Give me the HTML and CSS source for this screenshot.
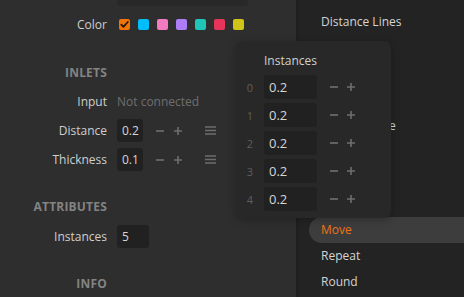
FILE: index.html
```html
<!DOCTYPE html>
<html>
<head>
<meta charset="utf-8">
<link rel="stylesheet" href="styles.css">
</head>
<body>
<div class="app">
  <div class="inspector">
    <div class="row row-top">
      <div class="label"></div>
      <div class="name-field">Distance Lines</div>
    </div>
    <div class="row row-color">
      <div class="label">Color</div>
      <div class="swatches">
        <span class="swatch sw-orange"><svg width="11" height="11" viewBox="0 0 11 11"><path d="M2.3 5.6 L4.4 7.8 L8.8 3.0" fill="none" stroke="#2a1a0a" stroke-width="1.8" stroke-linecap="round" stroke-linejoin="round"/></svg></span>
        <span class="swatch sw-cyan"></span>
        <span class="swatch sw-pink"></span>
        <span class="swatch sw-purple"></span>
        <span class="swatch sw-teal"></span>
        <span class="swatch sw-red"></span>
        <span class="swatch sw-yellow"></span>
      </div>
    </div>
    <div class="heading h-inlets"><span>INLETS</span></div>
    <div class="row row-field r-input">
      <div class="label">Input</div>
      <div class="muted">Not connected</div>
    </div>
    <div class="row row-field r-gap">
      <div class="label">Distance</div>
      <div class="num">0.2</div>
      <div class="steppers">
        <svg class="ico" width="8" height="8" viewBox="0 0 8 8"><path d="M0 4H8" stroke="#6e6e6e" stroke-width="1.6"/></svg>
        <svg class="ico" width="8" height="8" viewBox="0 0 8 8"><path d="M0 4H8M4 0V8" stroke="#6e6e6e" stroke-width="1.6"/></svg>
      </div>
      <svg class="menu" width="11" height="9" viewBox="0 0 11 9"><path d="M0 1H11M0 4.5H11M0 8H11" stroke="#6e6e6e" stroke-width="1.6"/></svg>
    </div>
    <div class="row row-field r-gap">
      <div class="label">Thickness</div>
      <div class="num">0.1</div>
      <div class="steppers">
        <svg class="ico" width="8" height="8" viewBox="0 0 8 8"><path d="M0 4H8" stroke="#6e6e6e" stroke-width="1.6"/></svg>
        <svg class="ico" width="8" height="8" viewBox="0 0 8 8"><path d="M0 4H8M4 0V8" stroke="#6e6e6e" stroke-width="1.6"/></svg>
      </div>
      <svg class="menu" width="11" height="9" viewBox="0 0 11 9"><path d="M0 1H11M0 4.5H11M0 8H11" stroke="#6e6e6e" stroke-width="1.6"/></svg>
    </div>
    <div class="heading h-attr"><span>ATTRIBUTES</span></div>
    <div class="row row-field r-inst">
      <div class="label">Instances</div>
      <div class="num num-wide">5</div>
    </div>
    <div class="heading h-info"><span>INFO</span></div>
  </div>
  <div class="divider"></div>
  <div class="browser">
    <ul class="list">
      <li class="item">Distance Field</li>
      <li class="item">Distance Lines</li>
      <li class="item">Edge</li>
      <li class="item">Fill</li>
      <li class="item">Grid</li>
      <li class="item">Lattice Shape</li>
      <li class="item">Line</li>
      <li class="item">Mirror</li>
      <li class="item">Mask</li>
      <li class="item active">Move</li>
      <li class="item">Repeat</li>
      <li class="item">Round</li>
    </ul>
  </div>
  <div class="popover">
    <div class="pop-title">Instances</div>
    <div class="pop-rows">
      <div class="pop-row"><span class="idx">0</span><span class="pnum">0.2</span><span class="steppers"><svg width="8" height="8" viewBox="0 0 8 8"><path d="M0 4H8" stroke="#6e6e6e" stroke-width="1.6"/></svg><svg width="8" height="8" viewBox="0 0 8 8"><path d="M0 4H8M4 0V8" stroke="#6e6e6e" stroke-width="1.6"/></svg></span></div>
      <div class="pop-row"><span class="idx">1</span><span class="pnum">0.2</span><span class="steppers"><svg width="8" height="8" viewBox="0 0 8 8"><path d="M0 4H8" stroke="#6e6e6e" stroke-width="1.6"/></svg><svg width="8" height="8" viewBox="0 0 8 8"><path d="M0 4H8M4 0V8" stroke="#6e6e6e" stroke-width="1.6"/></svg></span></div>
      <div class="pop-row"><span class="idx">2</span><span class="pnum">0.2</span><span class="steppers"><svg width="8" height="8" viewBox="0 0 8 8"><path d="M0 4H8" stroke="#6e6e6e" stroke-width="1.6"/></svg><svg width="8" height="8" viewBox="0 0 8 8"><path d="M0 4H8M4 0V8" stroke="#6e6e6e" stroke-width="1.6"/></svg></span></div>
      <div class="pop-row"><span class="idx">3</span><span class="pnum">0.2</span><span class="steppers"><svg width="8" height="8" viewBox="0 0 8 8"><path d="M0 4H8" stroke="#6e6e6e" stroke-width="1.6"/></svg><svg width="8" height="8" viewBox="0 0 8 8"><path d="M0 4H8M4 0V8" stroke="#6e6e6e" stroke-width="1.6"/></svg></span></div>
      <div class="pop-row"><span class="idx">4</span><span class="pnum">0.2</span><span class="steppers"><svg width="8" height="8" viewBox="0 0 8 8"><path d="M0 4H8" stroke="#6e6e6e" stroke-width="1.6"/></svg><svg width="8" height="8" viewBox="0 0 8 8"><path d="M0 4H8M4 0V8" stroke="#6e6e6e" stroke-width="1.6"/></svg></span></div>
    </div>
  </div>
</div>
</body>
</html>
```
FILE: styles.css
```css
* { box-sizing: border-box; }
html, body {
  margin: 0;
  padding: 0;
  width: 464px;
  height: 297px;
  overflow: hidden;
  background: #2e2e2e;
  font-family: "Open Sans", "Noto Sans", sans-serif;
  font-size: 12px;
  color: #d2d2d2;
}
.app {
  position: relative;
  display: flex;
  width: 464px;
  height: 297px;
  overflow: hidden;
}
.inspector {
  width: 296px;
  flex: none;
  display: flex;
  flex-direction: column;
  background: #2e2e2e;
}
.divider {
  width: 3px;
  flex: none;
  background: #1f1f1f;
}
.browser {
  flex: 1;
  background: #232323;
  overflow: hidden;
}
.row {
  display: flex;
  align-items: center;
  gap: 10px;
}
.label {
  width: 107px;
  flex: none;
  text-align: right;
  color: #cfcfcf;
  line-height: 16px;
}
.row-top {
  height: 24px;
  margin-top: -18px;
}
.name-field {
  width: 131px;
  height: 24px;
  border-radius: 4px;
  background: #282828;
  color: #3a3a3a;
  padding-left: 8px;
  line-height: 24px;
  font-size: 11px;
}
.row-color {
  height: 11px;
  margin-top: 13px;
  gap: 12px;
}
.swatches {
  display: flex;
  gap: 8px;
}
.swatch {
  width: 11px;
  height: 11px;
  border-radius: 2px;
  display: block;
}
.swatch svg { display: block; }
.sw-orange { background: #f27405; }
.sw-cyan { background: #00bdfc; }
.sw-pink { background: #f27ac0; }
.sw-purple { background: #ad7cf7; }
.sw-teal { background: #1fc6b8; }
.sw-red { background: #e7345a; }
.sw-yellow { background: #d1c418; }
.heading {
  height: 16px;
  display: flex;
  justify-content: flex-end;
  width: 107px;
  font-weight: 700;
  color: #838383;
  font-size: 12px;
  line-height: 16px;
  letter-spacing: 0.2px;
}
.h-inlets { margin-top: 35px; }
.h-attr { margin-top: 28px; }
.h-info { margin-top: 28px; }
.row-field {
  height: 23px;
}
.r-input { margin-top: 9px; }
.r-gap { margin-top: 6px; }
.r-inst { margin-top: 10px; }
.muted {
  color: #6f6f6f;
}
.num {
  width: 26px;
  height: 23px;
  border-radius: 3px;
  background: #212121;
  color: #d6d6d6;
  line-height: 23px;
  padding-left: 5px;
}
.num-wide { width: 32px; }
.steppers {
  display: flex;
  align-items: center;
  gap: 10px;
  margin-left: 3px;
}
.steppers svg { display: block; }
.menu {
  display: block;
  margin-left: 13px;
}
.list {
  list-style: none;
  margin: -17px 0 0 0;
  padding: 0 0 0 10px;
}
.item {
  height: 26px;
  line-height: 26px;
  padding-left: 12px;
  color: #d4d4d4;
  border-radius: 13px 0 0 13px;
  white-space: nowrap;
}
.item.active {
  background: #3d3d3d;
  color: #ec7418;
}
.popover {
  position: absolute;
  left: 236px;
  top: 41px;
  width: 155px;
  height: 177px;
  background: #282828;
  border-radius: 7px;
  padding: 12px 0 0 0;
  box-shadow: 0 2px 8px rgba(0,0,0,0.25);
}
.pop-title {
  height: 16px;
  line-height: 16px;
  padding-left: 28px;
  color: #d0d0d0;
}
.pop-rows {
  margin-top: 6px;
  display: flex;
  flex-direction: column;
  gap: 4px;
}
.pop-row {
  display: flex;
  align-items: center;
  height: 24px;
}
.idx {
  width: 28px;
  text-align: center;
  color: #5e5e5e;
  font-size: 11px;
}
.pnum {
  width: 53px;
  height: 24px;
  line-height: 24px;
  background: #212121;
  border-radius: 3px;
  padding-left: 5px;
  color: #d6d6d6;
  font-size: 13px;
}
.pop-row .steppers {
  margin-left: 13px;
  gap: 9px;
}
```
